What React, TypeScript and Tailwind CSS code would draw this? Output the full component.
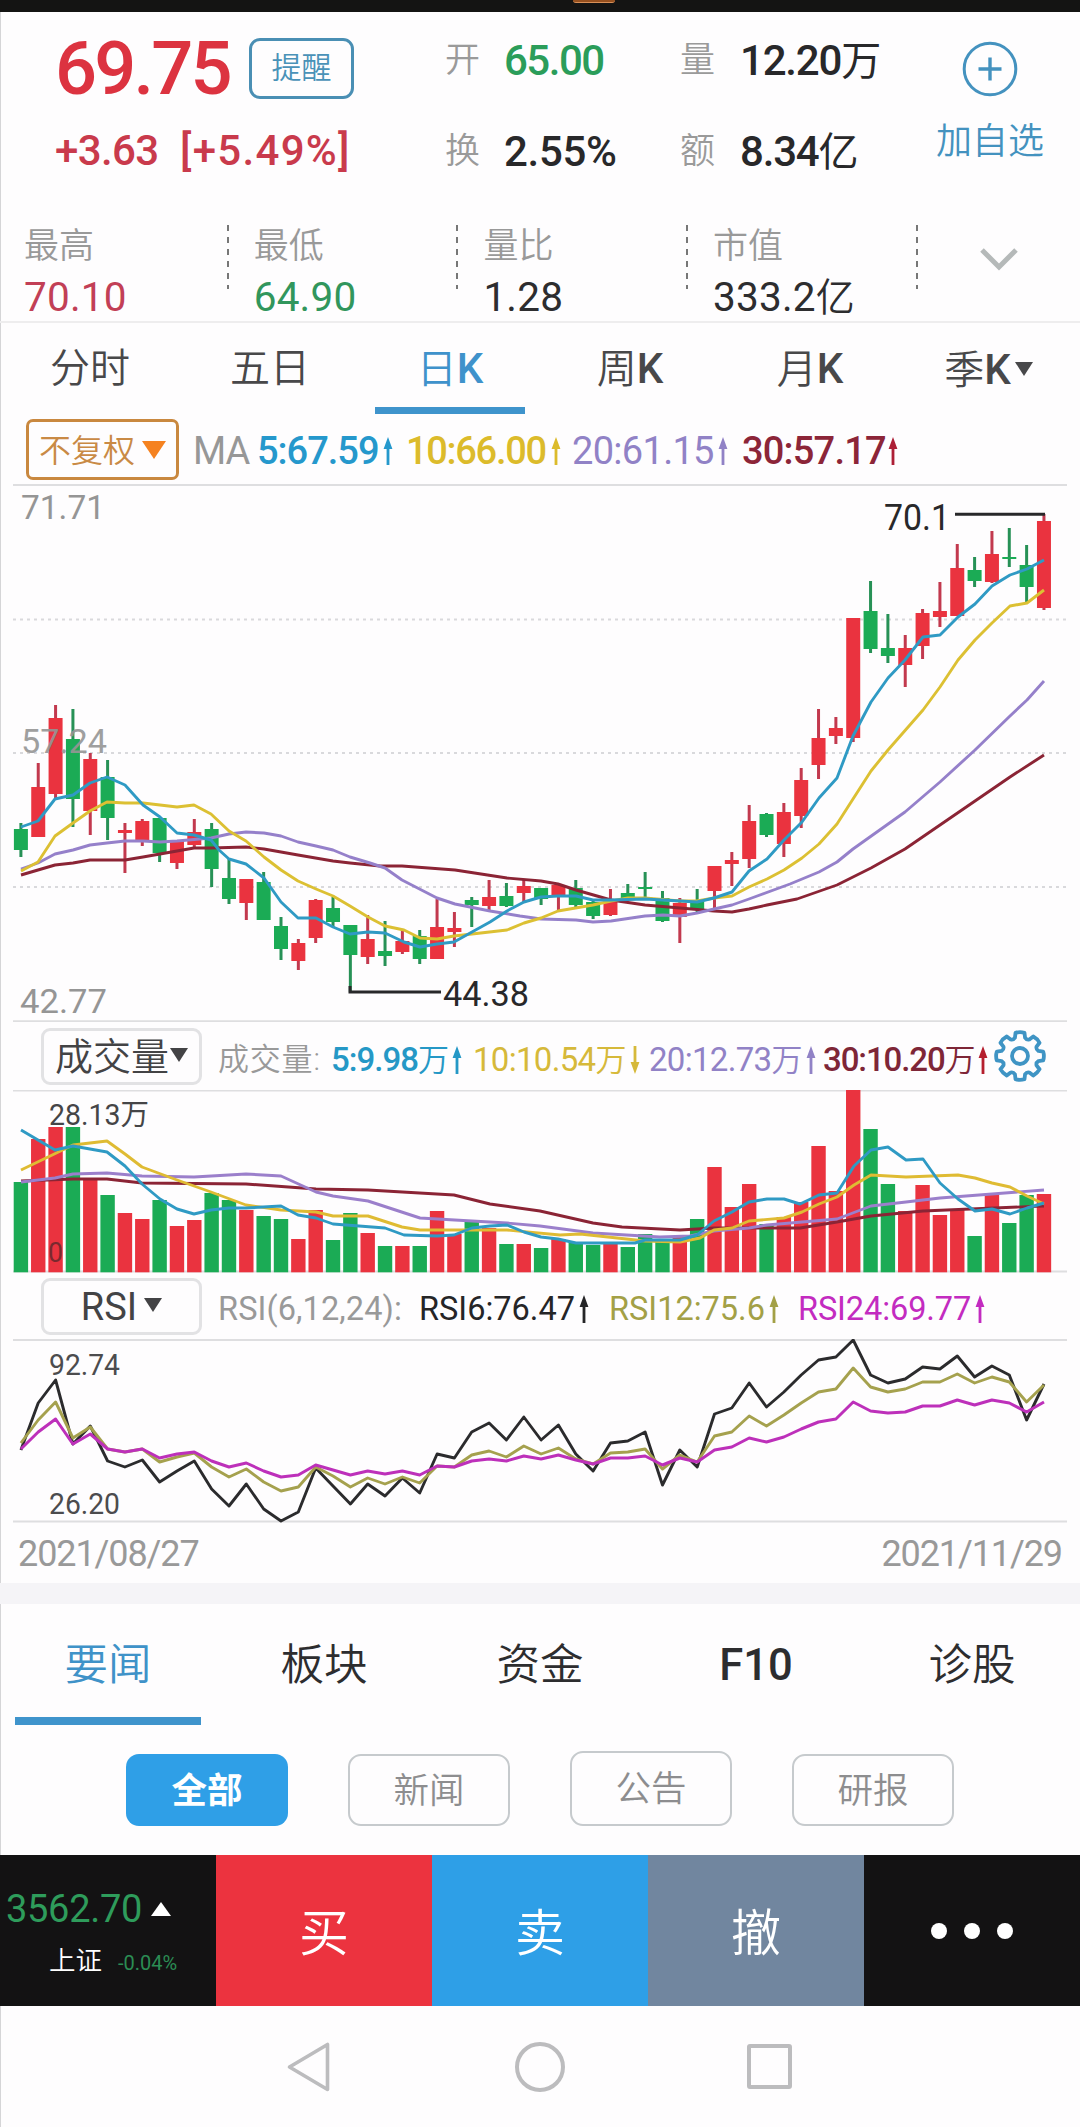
import React from "react";

const RED = "#ea333f";
const GREEN = "#1bab55";
const STEP = 17.34;
const cx = (i: number) => 20.9 + i * STEP;

type Candle = [kind: "r" | "g", high: number, top: number, bottom: number, low: number];

const candles: Candle[] = [
  ["g", 823, 829, 850, 857], ["r", 763, 787, 837, 837], ["r", 705, 718, 794, 799], ["g", 709, 739, 799, 827],
  ["r", 753, 759, 811, 835], ["g", 760, 777, 818, 840], ["r", 823, 830, 833, 873], ["r", 819, 821, 841, 846],
  ["g", 818, 818, 853, 862], ["r", 840, 841, 863, 869], ["r", 819, 832, 845, 848], ["g", 823, 829, 869, 887],
  ["g", 859, 878, 899, 904], ["r", 879, 879, 903, 920], ["g", 872, 882, 920, 920], ["g", 917, 926, 949, 960],
  ["r", 939, 943, 961, 970], ["r", 899, 900, 938, 943], ["g", 897, 908, 922, 927], ["g", 925, 925, 955, 992],
  ["r", 915, 939, 957, 964], ["g", 921, 951, 956, 966], ["r", 930, 941, 952, 954], ["g", 930, 936, 959, 964],
  ["r", 899, 927, 959, 959], ["r", 912, 928, 932, 947], ["g", 897, 900, 905, 927], ["r", 880, 897, 906, 910],
  ["g", 883, 896, 906, 907], ["r", 880, 886, 893, 902], ["g", 888, 888, 899, 905], ["r", 884, 885, 897, 912],
  ["g", 880, 888, 905, 907], ["g", 900, 902, 916, 919], ["r", 889, 901, 915, 916], ["g", 884, 893, 898, 899],
  ["g", 872, 887, 889, 898], ["g", 891, 898, 921, 922], ["r", 898, 903, 917, 943], ["g", 889, 900, 909, 912],
  ["r", 866, 866, 891, 909], ["r", 852, 860, 864, 886], ["r", 805, 821, 859, 868], ["g", 813, 814, 835, 837],
  ["r", 803, 812, 844, 857], ["r", 768, 780, 816, 828], ["r", 709, 738, 765, 779], ["r", 717, 728, 736, 744],
  ["r", 618, 618, 738, 742], ["g", 581, 611, 649, 653], ["g", 614, 648, 656, 663], ["r", 635, 648, 665, 687],
  ["r", 609, 613, 646, 659], ["r", 582, 611, 617, 627], ["r", 544, 568, 616, 616], ["g", 557, 570, 581, 587],
  ["r", 531, 554, 582, 583], ["g", 528, 557, 559, 567], ["g", 545, 565, 587, 603], ["r", 514, 521, 608, 610],
];

const MA5 = "21,827 38,821 55,799 73,795 90,783 107,777 125,785 143,805 160,817 177,833 194,835 211,840 219,850 229,859 246,864 264,878 281,902 298,918 316,918 333,927 350,934 368,932 385,933 404,942 420,947 437,944 454,942 472,932 490,922 507,911 524,902 541,897 558,896 576,896 593,900 611,900 645,899 680,901 697,902 714,898 732,892 749,871 767,859 784,840 802,822 819,798 837,778 853,736 871,702 888,678 905,660 923,637 940,635 958,617 975,604 992,586 1010,575 1027,569 1044,560";
const MA10 = "21,871 38,862 55,836 73,823 90,811 107,802 125,803 143,803 160,805 177,807 194,805 211,814 229,831 246,841 264,857 281,870 298,881 316,889 333,896 350,906 368,917 385,926 404,930 420,938 437,939 454,936 472,934 507,930 524,923 541,918 558,911 593,905 611,901 628,898 645,898 680,901 697,901 714,898 732,896 749,887 767,879 784,870 802,858 819,844 837,824 853,799 871,771 888,750 923,710 940,687 958,660 975,640 992,623 1010,606 1027,603 1044,590";
const MA20 = "21,869 38,863 55,854 73,850 90,845 107,843 125,841 143,841 160,842 177,841 211,838 229,834 246,832 264,833 281,836 298,842 316,846 333,850 350,857 370,863 385,868 402,880 437,898 455,904 490,911 520,916 541,919 576,920 593,922 611,921 645,916 663,915 680,916 697,913 714,909 732,905 749,899 790,884 819,872 837,862 853,849 905,812 940,782 975,750 1010,716 1027,700 1044,681";
const MA30 = "21,875 38,870 55,865 73,863 90,860 125,860 143,857 160,854 177,851 194,848 211,848 246,847 264,849 298,855 333,861 350,863 380,866 402,866 455,870 507,878 541,881 558,884 576,890 611,900 645,905 680,908 714,911 732,912 749,909 767,905 797,899 837,885 871,868 905,849 1010,777 1044,755";

const volumeTops = [
  1182, 1139, 1127, 1127, 1179, 1195, 1213, 1219, 1200, 1226, 1220, 1193, 1200, 1210, 1216, 1219, 1239, 1210, 1240,
  1213, 1233, 1246, 1246, 1246, 1211, 1234, 1221, 1228, 1244, 1244, 1248, 1239, 1242, 1245, 1244, 1247, 1234, 1241,
  1237, 1219, 1167, 1207, 1184, 1224, 1217, 1202, 1146, 1191, 1090, 1129, 1184, 1211, 1185, 1215, 1209, 1236, 1194,
  1223, 1195, 1194,
];
const volumeColors = "grrgrgrrgrrggrggrrggrgrgrrgrgrgrggrgggrgrrrgrrrrrggrrrrgrggr";

const V5 = "21,1130 55,1150 73,1146 107,1152 125,1166 142,1184 160,1199 177,1209 194,1214 211,1210 229,1208 246,1208 281,1206 298,1215 316,1218 333,1224 385,1228 404,1235 437,1236 454,1235 472,1228 490,1226 507,1225 524,1232 541,1237 558,1239 576,1243 635,1243 645,1240 680,1240 697,1235 714,1221 732,1212 749,1202 767,1199 784,1199 800,1204 819,1195 837,1193 854,1166 871,1150 888,1147 906,1160 923,1159 940,1183 958,1199 975,1211 992,1209 1010,1214 1027,1208 1044,1203";
const V10 = "21,1170 73,1145 107,1141 125,1154 142,1167 177,1180 211,1192 246,1205 281,1210 316,1212 333,1216 368,1216 402,1227 420,1230 472,1230 507,1230 560,1235 580,1234 645,1241 680,1242 700,1238 714,1230 732,1228 749,1221 784,1218 802,1212 819,1204 837,1197 854,1185 871,1175 906,1177 958,1175 975,1178 992,1183 1010,1187 1027,1196 1044,1204";
const V20 = "21,1182 55,1178 73,1174 107,1173 142,1176 194,1177 246,1174 281,1176 316,1192 333,1196 368,1201 420,1218 507,1223 540,1226 593,1233 660,1237 690,1236 714,1231 749,1228 767,1225 837,1219 871,1206 906,1202 940,1198 1044,1190";
const V30 = "21,1181 73,1179 107,1179 142,1183 246,1184 316,1189 368,1190 454,1195 490,1204 540,1211 593,1223 622,1227 680,1230 714,1228 800,1228 837,1222 871,1216 923,1211 1044,1206";

const RSI6 = [
  1450, 1403, 1380, 1444, 1426, 1461, 1467, 1460, 1482, 1471, 1461, 1489, 1506, 1484, 1509, 1521, 1512, 1468, 1486,
  1504, 1484, 1496, 1478, 1493, 1454, 1458, 1432, 1423, 1440, 1417, 1440, 1425, 1454, 1471, 1443, 1441, 1432, 1485,
  1450, 1467, 1414, 1408, 1383, 1407, 1392, 1375, 1360, 1357, 1340, 1375, 1383, 1379, 1367, 1369, 1356, 1377, 1366,
  1375, 1420, 1384,
];
const RSI12 = [
  1443, 1420, 1402, 1438, 1427, 1449, 1452, 1449, 1462, 1457, 1453, 1467, 1477, 1469, 1482, 1491, 1487, 1467, 1476,
  1487, 1478, 1484, 1477, 1483, 1466, 1467, 1455, 1451, 1457, 1446, 1454, 1448, 1459, 1464, 1453, 1452, 1449, 1469,
  1455, 1462, 1436, 1432, 1416, 1426, 1415, 1403, 1392, 1389, 1368, 1387, 1392, 1389, 1382, 1382, 1374, 1383, 1377,
  1382, 1402, 1385,
];
const RSI24 = [
  1449, 1432, 1419, 1444, 1434, 1449, 1452, 1449, 1458, 1454, 1452, 1461, 1467, 1463, 1471, 1477, 1475, 1465, 1470,
  1475, 1471, 1474, 1471, 1475, 1466, 1467, 1461, 1459, 1461, 1456, 1459, 1455, 1460, 1464, 1458, 1458, 1456, 1465,
  1458, 1462, 1450, 1447, 1438, 1442, 1437, 1429, 1422, 1419, 1402, 1411, 1413, 1412, 1406, 1406, 1400, 1405, 1400,
  1403, 1412, 1402,
];
const toPoints = (ys: number[]) => ys.map((y, i) => `${cx(i).toFixed(1)},${y}`).join(" ");

function Line({ points, color, width = 2.9 }: { points: string; color: string; width?: number }) {
  return <polyline points={points} fill="none" stroke={color} strokeWidth={width} strokeLinejoin="round" />;
}

function Label({ x, y, w, size, color, children, opacity = 1, weight = 400 }: {
  x: number; y: number; w: number; size: number; color: string; children: string; opacity?: number; weight?: number;
}) {
  return (
    <text x={x} y={y} textLength={w} lengthAdjust="spacingAndGlyphs" fontSize={size} fontWeight={weight} fill={color} opacity={opacity}>
      {children}
    </text>
  );
}

function Arrow({ down = false, className = "" }: { down?: boolean; className?: string }) {
  return (
    <svg viewBox="0 0 10 28" className={`h-7 w-2.5 shrink-0 ${down ? "rotate-180" : ""} ${className}`} fill="currentColor">
      <path d="M5 0 9.4 12H6.4V28H3.6V12H.6Z" />
    </svg>
  );
}

function Caret({ className }: { className: string }) {
  return (
    <svg viewBox="0 0 18 14" className={className} fill="currentColor" preserveAspectRatio="none">
      <path d="M0 0H18L9 14Z" />
    </svg>
  );
}

function Header() {
  return (
    <div className="flex h-[188px]">
      <div className="w-[445px] pl-[55px] pt-[25px]">
        <div className="flex h-[62px] items-center">
          <span className="w-[194px] pt-[2px] text-[74px] font-medium leading-none tracking-[-2.8px] text-[#dc3340]">69.75</span>
          <span className="flex h-[61px] w-[105px] items-center justify-center rounded-[11px] border-[3px] border-[#4a8fb4] text-[30px] font-[350] leading-none text-[#4a92b8]">
            提醒
          </span>
        </div>
        <div className="mt-[20px] flex h-[64px] items-center text-[42px] leading-none text-[#c93a4c]">
          <span className="w-[125px] font-medium tracking-[-0.6px]">+3.63</span>
          <span className="font-medium tracking-[1.3px]">[+5.49%]</span>
        </div>
      </div>
      <div className="grid h-[183px] w-[455px] grid-cols-[59px_176px_60px_1fr] grid-rows-[89px_91px] items-center whitespace-nowrap pt-[4px] text-[42px] font-medium leading-none tracking-[-1.2px] text-[#28282a]">
        <span className="text-[35px] font-[350] text-[#9a9a9a]">开</span>
        <span className="tracking-[-1.5px] text-[#2b9d5a]">65.00</span>
        <span className="text-[35px] font-[350] text-[#9a9a9a]">量</span>
        <span>12.20<span className="text-[40px] font-normal">万</span></span>
        <span className="pt-[2px] text-[35px] font-[350] text-[#9a9a9a]">换</span>
        <span className="pt-[2px] tracking-[-0.3px]">2.55%</span>
        <span className="pt-[2px] text-[35px] font-[350] text-[#9a9a9a]">额</span>
        <span className="pt-[2px]">8.34<span className="text-[40px] font-normal">亿</span></span>
      </div>
      <div className="flex w-[180px] flex-col items-center pt-[29px] text-[#4492bf]">
        <svg viewBox="0 0 56 56" className="size-14" fill="none" stroke="currentColor" strokeWidth="3">
          <circle cx="28" cy="28" r="25.8" />
          <path d="M28 16.5V39.5M16.5 28H39.5" strokeWidth="3.4" />
        </svg>
        <span className="mt-[27px] text-[36px] font-[350] leading-none">加自选</span>
      </div>
    </div>
  );
}

const stats = [
  { label: "最高", value: "70.10", unit: "", color: "text-[#c23f56]" },
  { label: "最低", value: "64.90", unit: "", color: "text-[#31965c]" },
  { label: "量比", value: "1.28", unit: "", color: "text-[#2d2d2f]" },
  { label: "市值", value: "333.2", unit: "亿", color: "text-[#2d2d2f]" },
];

function Stats() {
  return (
    <div className="flex h-[123px] border-b-2 border-[#eeedee] pl-[24px]">
      {stats.map((s) => (
        <div key={s.label} className="flex w-[229.7px] justify-between">
          <div className="whitespace-nowrap pt-[29px] leading-none">
            <div className="text-[35px] font-[350] text-[#999]">{s.label}</div>
            <div className={`mt-[13px] text-[40.5px] leading-none tracking-[0.2px] ${s.color}`}>
              {s.value}
              {s.unit && <span className="text-[39px] font-[350]">{s.unit}</span>}
            </div>
          </div>
          <svg viewBox="0 0 2 64" className="mr-[25px] mt-[25px] h-16 w-0.5 shrink-0" stroke="#777" strokeWidth="2">
            <path d="M1 0V64" strokeDasharray="6 6" />
          </svg>
        </div>
      ))}
      <svg viewBox="0 0 38 24" className="ml-[37px] mt-[47px] h-6 w-[38px]" fill="none" stroke="#b5b9b9" strokeWidth="5">
        <path d="M2 3 19 20 36 3" />
      </svg>
    </div>
  );
}

function PeriodTabs() {
  const tabs = ["分时", "五日", "日K", "周K", "月K", "季K"];
  return (
    <div className="grid h-[91px] grid-cols-6 text-[40px] font-[350] leading-none text-[#48484a]">
      {tabs.map((t, i) => (
        <div key={t} className={`relative flex items-center justify-center ${i === 2 ? "text-[#3f92cb]" : ""}`}>
          <span className={i === 5 ? "pt-[3px]" : ""}>
            {t.replace("K", "")}
            {t.includes("K") && <span className="text-[42px] font-medium">K</span>}
          </span>
          {i === 5 && <Caret className="ml-[4px] mr-[3px] h-[14px] w-[18px]" />}
          {i === 2 && <span className="absolute bottom-0 h-[7px] w-[150px] bg-[#3f94cc]" />}
        </div>
      ))}
    </div>
  );
}

function MaRow() {
  return (
    <div className="flex h-[70px] items-center pl-[26px] text-[38px] leading-none">
      <div className="mt-[1px] flex h-[61px] w-[153px] items-center justify-center gap-[7px] rounded-[7px] border-[3px] border-[#c9883f] text-[32px] font-[350] text-[#c98a45]">
        <span className="pt-[3px]">不复权</span>
        <Caret className="h-[18px] w-6 text-[#f58220]" />
      </div>
      <div className="flex items-center pt-[4px]">
        <span className="ml-[14px] w-[64px] tracking-[-1px] text-[#979797]">MA</span>
        <div className="flex w-[149px] items-center gap-[4px] font-medium tracking-[-1px] text-[#2598cc]">5:67.59<Arrow /></div>
        <div className="flex w-[166px] items-center gap-[5px] font-medium tracking-[-1.3px] text-[#dcbb2b]">10:66.00<Arrow /></div>
        <div className="flex w-[170px] items-center gap-[4px] font-normal tracking-[-0.7px] text-[#9182c6]">20:61.15<Arrow /></div>
        <div className="flex items-center gap-[2px] font-medium tracking-[-0.8px] text-[#8c2538]">30:57.17<Arrow className="text-[#ad1f36]" /></div>
      </div>
    </div>
  );
}

function CandleChart() {
  return (
    <svg viewBox="0 484 1080 538" className="block h-[538px] w-full">
      <path d="M13 484.8H1067M13 1021.4H1067" stroke="#dedee0" strokeWidth="2.2" />
      <path d="M13 619.5H1067M13 753H1067M13 887H1067" stroke="#d9d9dc" strokeWidth="2" strokeDasharray="3 4" />
      {candles.map(([k, hi, top, bot, lo], i) => {
        const body = k === "r" ? RED : GREEN;
        const wick = k === "r" ? "#c2394e" : "#279156";
        return (
          <g key={i}>
            <rect x={cx(i) - 1.5} y={hi} width="3" height={lo - hi} fill={wick} />
            <rect x={cx(i) - 7} y={top} width="14" height={bot - top} fill={body} />
          </g>
        );
      })}
      <Line points={MA30} color="#8b2435" />
      <Line points={MA20} color="#9580ca" />
      <Line points={MA10} color="#dcc033" />
      <Line points={MA5} color="#2f9ac4" />
      <path d="M955 514.3H1045M350 986V992H441" stroke="#28282a" strokeWidth="3" fill="none" />
      <Label x={21} y={519} w={84} size={34} color="#959595">71.71</Label>
      <Label x={21} y={753} w={86} size={34} color="#959595" opacity={0.9}>57.24</Label>
      <Label x={20} y={1013} w={87} size={34} color="#959595">42.77</Label>
      <Label x={884} y={530} w={66} size={36} color="#28282a">70.1</Label>
      <Label x={443} y={1006} w={86} size={35} color="#28282a">44.38</Label>
    </svg>
  );
}

function Gear() {
  const teeth = 8;
  let d = "";
  for (let i = 0; i < teeth; i++) {
    const base = (i * 2 * Math.PI) / teeth - Math.PI / 2;
    const at = (r: number, a: number) => `${(26 + r * Math.cos(base + a)).toFixed(2)} ${(26 + r * Math.sin(base + a)).toFixed(2)}`;
    d += `${i === 0 ? "M" : "L"}${at(19, -0.27)}L${at(23.6, -0.19)}Q${at(24.6, 0)} ${at(23.6, 0.19)}L${at(19, 0.27)}Q${at(17.2, Math.PI / 8)} ${at(19, Math.PI / 4 - 0.27)}`;
  }
  return (
    <svg viewBox="0 0 52 52" className="size-[52px] shrink-0" fill="none" stroke="#3f94c4" strokeWidth="3.8" strokeLinejoin="round">
      <path d={d + "Z"} />
      <circle cx="26" cy="26" r="8" />
    </svg>
  );
}

function Wan() {
  return <span className="text-[31px] font-[350]">万</span>;
}

function VolumeHeader() {
  return (
    <div className="flex h-[68px] items-center whitespace-nowrap pl-[41px] text-[33px] leading-none">
      <div className="flex h-[57px] w-[161px] items-center justify-center rounded-[9px] border-[3px] border-[#e2e2e4] text-[38px] font-[350] text-[#434345]">
        <span className="pt-[2px]">成交量</span>
        <Caret className="mb-[3px] ml-[1px] h-[14px] w-[18px]" />
      </div>
      <div className="flex items-center pt-[7px]">
        <span className="ml-[16px] w-[113px] text-[31px] font-[350] tracking-[0.8px] text-[#999]">成交量:</span>
        <div className="flex w-[142px] items-center gap-[4px] font-medium tracking-[-1px] text-[#2598c6]"><span>5:9.98<Wan /></span><Arrow /></div>
        <div className="flex w-[176px] items-center gap-[4px] tracking-[-0.7px] text-[#d6b93a]"><span>10:10.54<Wan /></span><Arrow down /></div>
        <div className="flex w-[174px] items-center gap-[4px] tracking-[-0.7px] text-[#9182c6]"><span>20:12.73<Wan /></span><Arrow /></div>
        <div className="flex w-[171px] items-center gap-[3px] font-medium tracking-[-1.1px] text-[#7e2637]"><span>30:10.20<Wan /></span><Arrow className="text-[#b51f2e]" /></div>
      </div>
      <Gear />
    </div>
  );
}

function VolumeChart() {
  return (
    <svg viewBox="0 1090 1080 183" className="block h-[183px] w-full">
      <path d="M13 1090.6H1067M13 1271.6H1067" stroke="#dedee0" strokeWidth="2" />
      {volumeTops.map((y, i) => (
        <rect key={i} x={cx(i) - 7.2} y={y} width="14.4" height={1272.3 - y} fill={volumeColors[i] === "r" ? RED : GREEN} />
      ))}
      <Line points={V30} color="#8b2435" />
      <Line points={V20} color="#9b7fcb" />
      <Line points={V10} color="#dfbb33" />
      <Line points={V5} color="#2f9ac4" />
      <Label x={49} y={1125} w={100} size={29} color="#454547">28.13万</Label>
      <Label x={48} y={1262} w={15} size={28.5} color="#222" opacity={0.55}>0</Label>
    </svg>
  );
}

function RsiHeader() {
  return (
    <div className="flex h-[66px] items-center whitespace-nowrap pl-[41px] text-[32.5px] leading-none">
      <div className="flex h-[57px] w-[161px] items-center justify-center gap-[7px] rounded-[9px] border-[3px] border-[#e2e2e4] text-[38px] text-[#434345]">
        <span className="pt-[2px]">RSI</span>
        <Caret className="mb-[3px] h-[14px] w-[18px]" />
      </div>
      <div className="flex items-center pt-[6px]">
        <span className="ml-[16px] w-[201px] tracking-[0.1px] text-[#999]">RSI(6,12,24):</span>
        <div className="flex w-[190px] items-center gap-[4px] tracking-[0px] text-[#252527]">RSI6:76.47<Arrow /></div>
        <div className="flex w-[189px] items-center gap-[4px] tracking-[0px] text-[#a3a046]">RSI12:75.6<Arrow /></div>
        <div className="flex items-center gap-[4px] tracking-[-0.1px] text-[#c32bc0]">RSI24:69.77<Arrow /></div>
      </div>
    </div>
  );
}

function RsiChart() {
  return (
    <svg viewBox="0 1339 1080 184" className="block h-[184px] w-full">
      <path d="M13 1340H1067M13 1521.6H1067" stroke="#dedee0" strokeWidth="2" />
      <Line points={toPoints(RSI6)} color="#2b2b2d" />
      <Line points={toPoints(RSI12)} color="#a5a14e" />
      <Line points={toPoints(RSI24)} color="#bd30ba" width={3} />
      <Label x={49} y={1375} w={71} size={29} color="#4c4c4e">92.74</Label>
      <Label x={49} y={1514} w={71} size={29} color="#4c4c4e">26.20</Label>
    </svg>
  );
}

function NewsTabs() {
  const tabs = ["要闻", "板块", "资金", "F10", "诊股"];
  return (
    <div className="grid h-[121px] grid-cols-5 text-[43.5px] font-[350] leading-none text-[#2d2d2f]">
      {tabs.map((t, i) => (
        <div key={t} className={`relative flex items-center justify-center pt-[3px] ${i === 0 ? "text-[#3f92c8]" : ""}`}>
          <span className={t === "F10" ? "font-medium" : ""}>{t}</span>
          {i === 0 && <span className="absolute bottom-0 h-2 w-[186px] bg-[#3f94cc]" />}
        </div>
      ))}
    </div>
  );
}

function Chips() {
  const chip = "flex w-[162px] items-center justify-center rounded-[13px] leading-none pt-[3px]";
  return (
    <div className="flex h-[130px] items-end gap-[60px] pb-[29px] pl-[126px] text-[35.5px] font-[350] text-[#8d8d8f]">
      <div className={`${chip} h-[72px] bg-[#2f9fe7] font-bold text-white`}>全部</div>
      <div className={`${chip} h-[72px] border-2 border-[#c6cacd]`}>新闻</div>
      <div className={`${chip} h-[75px] border-2 border-[#c6cacd]`}>公告</div>
      <div className={`${chip} h-[72px] border-2 border-[#c6cacd]`}>研报</div>
    </div>
  );
}

function ActionBar() {
  return (
    <div className="grid h-[151px] grid-cols-5 text-[50px] font-[350] leading-none text-white">
      <div className="bg-[#131213] pl-[6px] pt-[35px]">
        <div className="flex items-center text-[38px] font-normal text-[#2e9c5b]">
          <span className="w-[145px] tracking-[-0.3px]">3562.70</span>
          <svg viewBox="0 0 20 14" className="h-3.5 w-5" fill="#fff"><path d="M10 0 20 14H0Z" /></svg>
        </div>
        <div className="mt-[20px] flex items-center pl-[43px]">
          <span className="w-[69px] text-[26.5px]">上证</span>
          <span className="pt-[4px] text-[20px] font-normal text-[#2b8c53]">-0.04%</span>
        </div>
      </div>
      <div className="flex items-center justify-center bg-[#ec333f] pt-[6px]">买</div>
      <div className="flex items-center justify-center bg-[#2e9fe7] pt-[6px]">卖</div>
      <div className="flex items-center justify-center bg-[#71869f] pt-[6px]">撤</div>
      <div className="flex items-center justify-center gap-[17px] bg-[#131213]">
        <span className="size-4 rounded-full bg-white" />
        <span className="size-4 rounded-full bg-white" />
        <span className="size-4 rounded-full bg-white" />
      </div>
    </div>
  );
}

function SystemNav() {
  return (
    <div className="flex h-[121px] items-center pl-[286px]">
      <svg viewBox="0 0 46 52" className="h-[52px] w-[46px]" fill="none" stroke="#bcbcbe" strokeWidth="3.6" strokeLinejoin="round">
        <path d="M41.5 3.5V48.5L3.5 26Z" />
      </svg>
      <span className="ml-[183px] size-[50px] rounded-full border-4 border-[#bcbcbe]" />
      <span className="ml-[182px] size-[45px] rounded-[3px] border-4 border-[#bcbcbe]" />
    </div>
  );
}

export default function App() {
  return (
    <main
      className="flex h-[2127px] w-[1080px] flex-col overflow-hidden bg-[#fefdfe] font-['Roboto','Noto_Sans_CJK_SC',sans-serif] shadow-[inset_1px_0_0_#d5d5d7]"
      lang="zh-CN"
    >
      <div className="h-3 bg-[#141413] pl-[573px]">
        <div className="h-[3px] w-[42px] rounded-b-[4px] border-b border-[#d89058] bg-[#96501f]" />
      </div>
      <Header />
      <Stats />
      <PeriodTabs />
      <MaRow />
      <CandleChart />
      <VolumeHeader />
      <VolumeChart />
      <RsiHeader />
      <RsiChart />
      <div className="flex h-[60px] items-center justify-between pl-[18px] pr-[18px] pt-[2px] text-[36px] leading-none tracking-[-1.1px] text-[#999]">
        <span>2021/08/27</span>
        <span>2021/11/29</span>
      </div>
      <div className="h-[21px] bg-[#f5f4f7]" />
      <NewsTabs />
      <Chips />
      <ActionBar />
      <SystemNav />
    </main>
  );
}
